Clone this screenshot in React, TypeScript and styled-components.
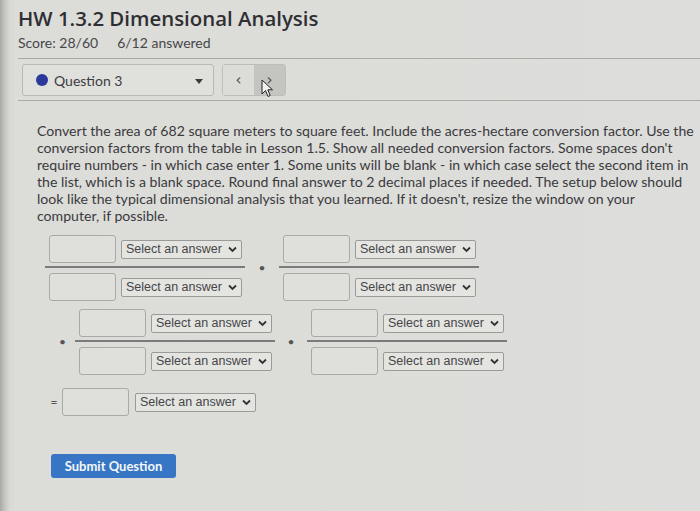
import React from "react";
import styled, { createGlobalStyle } from "styled-components";

const Global = createGlobalStyle`
  html, body { margin: 0; padding: 0; }
  body {
    width: 700px;
    height: 511px;
    overflow: hidden;
    background: linear-gradient(to right, #a9a9a5 0px, #c6c6c2 5px, #d9d9d5 10px, #dcdcd8 16px, #dddddb 100%);
    font-family: Lato, "Open Sans", sans-serif;
    color: #3a3a3c;
  }
`;

const Page = styled.div`
  display: flex;
  flex-direction: column;
  padding: 4px 0 0 18px;
`;

const Title = styled.h1`
  margin: 0;
  font-family: "Open Sans", Lato, sans-serif;
  font-weight: 600;
  font-size: 20.4px;
  line-height: 28px;
  color: #2f2f33;
`;

const ScoreLine = styled.div`
  display: flex;
  gap: 19px;
  margin-top: 2px;
  font-size: 14px;
  line-height: 18px;
  color: #47474a;
`;

const Rule = styled.div<{ $mt: number }>`
  height: 1px;
  background: #a9a9a6;
  margin-top: ${(p) => p.$mt}px;
`;

const QuestionBar = styled.div`
  display: flex;
  align-items: center;
  gap: 8px;
  padding: 5px 0 0 4px;
`;

const QSelect = styled.div`
  width: 192px;
  height: 32px;
  box-sizing: border-box;
  border: 1px solid #b9b9b6;
  border-radius: 3px;
  background: #e0e0dd;
  display: flex;
  align-items: center;
  padding: 0 10px 0 13px;
  font-size: 14px;
  color: #3d3d40;
  gap: 6px;
`;

const Dot = styled.span`
  width: 12px;
  height: 12px;
  border-radius: 50%;
  background: #2b3a9a;
`;

const Caret = styled.span`
  margin-left: auto;
  width: 0;
  height: 0;
  border-left: 4px solid transparent;
  border-right: 4px solid transparent;
  border-top: 5px solid #3b3b3e;
  margin-top: 2px;
`;

const NavGroup = styled.div`
  position: relative;
  display: flex;
  height: 32px;
  box-sizing: border-box;
  border: 1px solid #bdbdba;
  border-radius: 3px;
`;

const NavBtn = styled.div<{ $hover?: boolean }>`
  width: 31px;
  display: flex;
  align-items: center;
  justify-content: center;
  background: ${(p) => (p.$hover ? "#c4c4c0" : "#dcdcd9")};
  color: #4a4a4d;
  font-size: 15px;
  font-family: "DejaVu Sans", sans-serif;
`;

const Cursor = styled.svg`
  position: absolute;
  left: 38px;
  top: 14px;
`;

const Question = styled.p`
  margin: 21px 0 0 19px;
  font-size: 14.1px;
  line-height: 17px;
  color: #3a3a3d;
  white-space: nowrap;
`;

const Work = styled.div`
  display: flex;
  flex-direction: column;
  margin-top: 11px;
`;

const Row = styled.div<{ $pl: number; $mt?: number }>`
  display: flex;
  align-items: center;
  padding-left: ${(p) => p.$pl}px;
  margin-top: ${(p) => p.$mt ?? 0}px;
`;

const Frac = styled.div`
  display: flex;
  flex-direction: column;
  align-items: stretch;
`;

const FracPart = styled.div`
  display: flex;
  align-items: center;
  gap: 5px;
  padding: 0 3px 0 4px;
`;

const Bar = styled.div`
  height: 2px;
  background: #7b7b7b;
  margin: 3px 0 5px;
`;

const NumInput = styled.div`
  width: 67px;
  height: 28px;
  box-sizing: border-box;
  border: 1px solid #a9a9a7;
  border-radius: 3px;
  background: #dfdfdc;
`;

const Sel = styled.div`
  width: 121px;
  height: 19px;
  box-sizing: border-box;
  border: 1px solid #9a9a98;
  border-radius: 2px;
  background: #e4e4e1;
  display: flex;
  align-items: center;
  padding: 0 4px 0 4px;
  font-family: "Liberation Sans", Arial, sans-serif;
  font-size: 12.5px;
  color: #464648;
  gap: 4px;
`;

const Chevron = styled.svg`
  margin-left: auto;
`;

const Op = styled.span<{ $w: number }>`
  width: ${(p) => p.$w}px;
  display: flex;
  justify-content: center;
  font-size: 12px;
  color: #555;
  line-height: 1;
`;

const Submit = styled.button`
  margin: 38px 0 0 33px;
  align-self: flex-start;
  width: 125px;
  height: 24px;
  border: none;
  border-radius: 3px;
  background: #3676c4;
  color: #f4f6fa;
  font-family: Lato, "Open Sans", sans-serif;
  font-weight: 700;
  font-size: 13px;
  padding: 0;
`;

function Select() {
  return (
    <Sel>
      Select an answer
      <Chevron width="9" height="7" viewBox="0 0 9 7">
        <path d="M1 1.5 L4.5 5 L8 1.5" fill="none" stroke="#333" strokeWidth="1.8" />
      </Chevron>
    </Sel>
  );
}

function Fraction() {
  return (
    <Frac>
      <FracPart>
        <NumInput />
        <Select />
      </FracPart>
      <Bar />
      <FracPart>
        <NumInput />
        <Select />
      </FracPart>
    </Frac>
  );
}

const lines = [
  "Convert the area of 682 square meters to square feet. Include the acres-hectare conversion factor. Use the",
  "conversion factors from the table in Lesson 1.5. Show all needed conversion factors. Some spaces don't",
  "require numbers - in which case enter 1. Some units will be blank - in which case select the second item in",
  "the list, which is a blank space. Round final answer to 2 decimal places if needed. The setup below should",
  "look like the typical dimensional analysis that you learned. If it doesn't, resize the window on your",
  "computer, if possible.",
];

export default function App() {
  return (
    <>
      <Global />
      <Page>
        <Title>HW 1.3.2 Dimensional Analysis</Title>
        <ScoreLine>
          <span>Score: 28/60</span>
          <span>6/12 answered</span>
        </ScoreLine>
        <Rule $mt={6} />
        <QuestionBar>
          <QSelect>
            <Dot />
            Question 3
            <Caret />
          </QSelect>
          <NavGroup>
            <NavBtn>‹</NavBtn>
            <NavBtn $hover>›</NavBtn>
            <Cursor width="14" height="20" viewBox="0 0 14 20">
              <path
                d="M1 1 L1 15 L4.5 11.5 L7 17.5 L9.2 16.5 L6.8 10.8 L11.5 10.8 Z"
                fill="#f2f2f2"
                stroke="#222"
                strokeWidth="1"
                strokeLinejoin="round"
              />
            </Cursor>
          </NavGroup>
        </QuestionBar>
        <Rule $mt={4} />
        <Question>
          {lines.map((l, i) => (
            <React.Fragment key={i}>
              {l}
              {i < lines.length - 1 && <br />}
            </React.Fragment>
          ))}
        </Question>
        <Work>
          <Row $pl={27}>
            <Fraction />
            <Op $w={34}>•</Op>
            <Fraction />
          </Row>
          <Row $pl={32} $mt={8}>
            <Op $w={25}>•</Op>
            <Fraction />
            <Op $w={32}>•</Op>
            <Fraction />
          </Row>
          <Row $pl={28} $mt={13}>
            <Op $w={16}>=</Op>
            <NumInput />
            <Op $w={6}> </Op>
            <Select />
          </Row>
        </Work>
        <Submit>Submit Question</Submit>
      </Page>
    </>
  );
}
